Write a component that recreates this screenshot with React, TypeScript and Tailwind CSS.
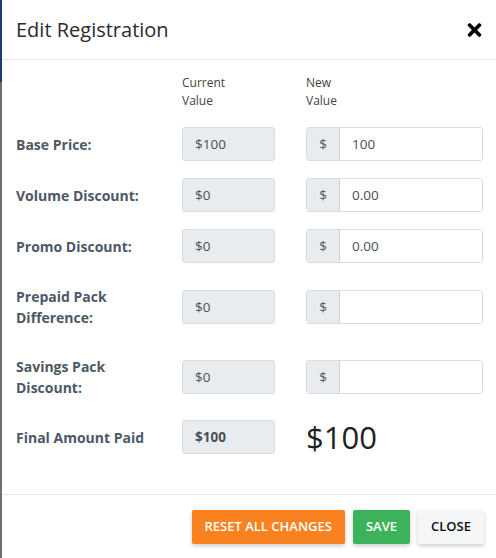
import { FaTimes } from 'react-icons/fa';

type Row = {
  label: string;
  current: string;
  value?: string;
  mt: string;
  final?: boolean;
};

const rows: Row[] = [
  { label: 'Base Price:', current: '$100', value: '100', mt: 'mt-[17px]' },
  { label: 'Volume Discount:', current: '$0', value: '0.00', mt: 'mt-[17px]' },
  { label: 'Promo Discount:', current: '$0', value: '0.00', mt: 'mt-[17px]' },
  { label: 'Prepaid Pack Difference:', current: '$0', value: '', mt: 'mt-[23px]' },
  { label: 'Savings Pack Discount:', current: '$0', value: '', mt: 'mt-[28px]' },
  { label: 'Final Amount Paid', current: '$100', mt: 'mt-[22px]', final: true },
];

function FieldRow({ row }: { row: Row }) {
  return (
    <div className={`flex items-center ${row.mt}`}>
      <div className="w-[166px] pr-[20px]">
        <span className="block text-[14px] font-bold leading-[21px] text-[#4d5866]">{row.label}</span>
      </div>
      <div
        className={`flex h-[34px] w-[93px] items-center rounded-[3px] border border-[#d9dcdf] bg-[#e9ecef] px-[12px] text-[13.5px] text-[#495057] ${
          row.final ? 'font-bold' : ''
        }`}
      >
        {row.current}
      </div>
      <div className="ml-[31px] w-[177px]">
        {row.final ? (
          <span className="block text-[31px] leading-[34px] text-[#222]">$100</span>
        ) : (
          <div className="flex h-[34px] overflow-hidden rounded-[3px] border border-[#d9dcdf]">
            <span className="flex w-[33px] items-center justify-center border-r border-[#d0d3d7] bg-[#e9ecef] text-[13.5px] text-[#555]">
              $
            </span>
            <input
              readOnly
              value={row.value}
              className="w-full flex-1 bg-white px-[12px] text-[13.5px] text-[#495057] outline-none"
            />
          </div>
        )}
      </div>
    </div>
  );
}

export default function App() {
  return (
    <div className="flex h-[558px] w-[496px] overflow-hidden bg-white font-['Open_Sans',sans-serif]">
      {/* backdrop peeking at left edge */}
      <div className="flex w-[2px] flex-col">
        <div className="h-[82px] bg-[#1c3d6e]" />
        <div className="flex-1 bg-[#6f6f6f]" />
      </div>

      <div className="flex flex-1 flex-col">
        {/* Header */}
        <div className="flex h-[60px] items-center justify-between border-b border-[#e6e6e6] pl-[14px] pr-[12px]">
          <h1 className="text-[20px] text-[#2b2b2b]">Edit Registration</h1>
          <FaTimes className="h-[20px] w-[19px] text-black" />
        </div>

        {/* Body */}
        <div className="flex-1 pl-[14px] pt-[14px]">
          <div className="flex text-[12px] leading-[18px] text-[#444]">
            <div className="w-[166px]" />
            <div className="w-[93px]">
              Current
              <br />
              Value
            </div>
            <div className="ml-[31px]">
              New
              <br />
              Value
            </div>
          </div>
          {rows.map((r) => (
            <FieldRow key={r.label} row={r} />
          ))}
        </div>

        {/* Footer */}
        <div className="flex h-[64px] items-center justify-end gap-[8px] border-t border-[#e6e6e6] pr-[12px]">
          <button className="h-[34px] rounded-[2px] bg-[#f7821f] px-[13px] text-[13px] font-semibold text-white shadow-[0_2px_4px_rgba(0,0,0,0.2)]">
            RESET ALL CHANGES
          </button>
          <button className="h-[34px] rounded-[2px] bg-[#3cb35a] px-[13px] text-[13px] font-semibold text-white shadow-[0_2px_4px_rgba(0,0,0,0.2)]">
            SAVE
          </button>
          <button className="h-[34px] rounded-[2px] bg-[#f5f6f8] px-[13px] text-[13px] font-semibold text-[#111] shadow-[0_2px_4px_rgba(0,0,0,0.2)]">
            CLOSE
          </button>
        </div>
      </div>
    </div>
  );
}
